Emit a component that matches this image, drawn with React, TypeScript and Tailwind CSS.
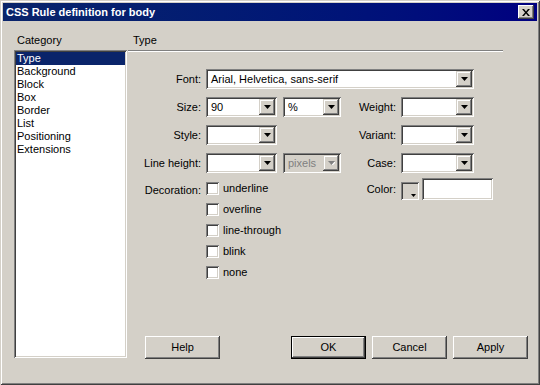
import type { ReactNode } from "react";

const sunken =
  "shadow-[inset_1px_1px_0_#808080,inset_-1px_-1px_0_#ffffff,inset_2px_2px_0_#404040,inset_-2px_-2px_0_#d4d0c8]";
const raised =
  "shadow-[inset_-1px_-1px_0_#404040,inset_1px_1px_0_#d4d0c8,inset_-2px_-2px_0_#808080,inset_2px_2px_0_#ffffff]";
const buttonBevel =
  "shadow-[inset_-1px_-1px_0_#404040,inset_1px_1px_0_#ffffff,inset_-2px_-2px_0_#808080]";

const categories = [
  "Type",
  "Background",
  "Block",
  "Box",
  "Border",
  "List",
  "Positioning",
  "Extensions",
];

const decorations = ["underline", "overline", "line-through", "blink", "none"];

const Arrow = ({ disabled }: { disabled?: boolean }) => (
  <svg width="7" height="4" viewBox="0 0 7 4" className="block">
    {disabled && <path d="M1 1h7L4.5 4.5z" fill="#ffffff" />}
    <path d="M0 0h7L3.5 4z" fill={disabled ? "#808080" : "#000000"} />
  </svg>
);

const Combo = ({
  width,
  value,
  disabled,
}: {
  width: string;
  value?: string;
  disabled?: boolean;
}) => (
  <div
    className={`flex h-[20px] p-[2px] ${width} ${sunken} ${
      disabled ? "bg-[#d4d0c8] text-[#808080]" : "bg-white text-black"
    }`}
  >
    <div className="flex-1 truncate pl-[3px] leading-[16px]">{value}</div>
    <div
      className={`flex h-[16px] w-[16px] items-center justify-center bg-[#d4d0c8] ${raised}`}
    >
      <Arrow disabled={disabled} />
    </div>
  </div>
);

const Label = ({ width, children }: { width: string; children: ReactNode }) => (
  <div className={`${width} shrink-0 pr-[5px] text-right`}>{children}</div>
);

const Button = ({ children, isDefault }: { children: ReactNode; isDefault?: boolean }) => (
  <button
    type="button"
    className={`flex h-[23px] w-[75px] items-center justify-center bg-[#d4d0c8] ${buttonBevel} ${
      isDefault ? "border border-black" : ""
    }`}
  >
    {children}
  </button>
);

export default function App() {
  return (
    <div className="flex h-[385px] w-[540px] flex-col bg-[#d4d0c8] p-[3px] font-['Liberation_Sans',Arial,sans-serif] text-[11px] text-black shadow-[inset_1px_1px_0_#d4d0c8,inset_-1px_-1px_0_#404040,inset_2px_2px_0_#ffffff,inset_-2px_-2px_0_#808080]">
      {/* title bar */}
      <div className="flex h-[18px] shrink-0 items-center justify-between bg-linear-to-r from-[#0a246a] to-[#000080] pl-[3px] pr-[3px]">
        <span className="font-bold text-white">CSS Rule definition for body</span>
        <button
          type="button"
          aria-label="Close"
          className={`flex h-[14px] w-[16px] items-center justify-center bg-[#d4d0c8] ${buttonBevel}`}
        >
          <svg width="8" height="7" viewBox="0 0 8 7" className="block">
            <path d="M0 0h2l2 2.5L6 0h2L5 3.5 8 7H6L4 4.5 2 7H0l3-3.5z" fill="#000" />
          </svg>
        </button>
      </div>

      <div className="flex flex-1 pl-[11px]">
        {/* category list */}
        <div className="w-[113px] shrink-0 pt-[12px]">
          <div className="h-[14px] pl-[3px] leading-[14px]">Category</div>
          <div className={`mt-[3px] h-[308px] bg-white p-[2px] ${sunken}`}>
            {categories.map((c, i) => (
              <div
                key={c}
                className={`h-[13px] pl-[1px] leading-[13px] ${
                  i === 0 ? "bg-[#0a246a] text-white" : ""
                }`}
              >
                {c}
              </div>
            ))}
          </div>
        </div>

        {/* type panel */}
        <div className="ml-[1px] flex flex-1 flex-col pt-[12px]">
          <div className="h-[14px] pl-[5px] leading-[14px]">Type</div>
          <div className="mt-[3px] h-[2px] w-[375px] border-t border-b border-t-[#808080] border-b-white" />

          <div className="mt-[17px] flex h-[20px] items-center">
            <Label width="w-[78px]">Font:</Label>
            <Combo width="w-[268px]" value="Arial, Helvetica, sans-serif" />
          </div>

          <div className="mt-[8px] flex h-[20px] items-center">
            <Label width="w-[78px]">Size:</Label>
            <Combo width="w-[71px]" value="90" />
            <div className="ml-[6px]">
              <Combo width="w-[58px]" value="%" />
            </div>
            <Label width="w-[60px]">Weight:</Label>
            <Combo width="w-[73px]" />
          </div>

          <div className="mt-[8px] flex h-[20px] items-center">
            <Label width="w-[78px]">Style:</Label>
            <Combo width="w-[71px]" />
            <div className="w-[64px]" />
            <Label width="w-[60px]">Variant:</Label>
            <Combo width="w-[73px]" />
          </div>

          <div className="mt-[8px] flex h-[20px] items-center">
            <Label width="w-[78px]">Line height:</Label>
            <Combo width="w-[71px]" />
            <div className="ml-[6px]">
              <Combo width="w-[58px]" value="pixels" disabled />
            </div>
            <Label width="w-[60px]">Case:</Label>
            <Combo width="w-[73px]" />
          </div>

          <div className="mt-[5px] flex items-start">
            <div className="flex w-[213px] pt-[4px]">
              <Label width="w-[78px]">
                <span className="leading-[13px]">Decoration:</span>
              </Label>
              <div className="flex flex-col gap-[8px]">
                {decorations.map((d) => (
                  <div key={d} className="flex h-[13px] items-center">
                    <div className={`h-[13px] w-[13px] bg-white ${sunken}`} />
                    <span className="ml-[4px] leading-[13px]">{d}</span>
                  </div>
                ))}
              </div>
            </div>
            <div className="flex h-[22px] items-center">
              <Label width="w-[60px]">Color:</Label>
              <div className={`relative h-[18px] w-[18px] self-end bg-[#d4d0c8] ${sunken}`}>
                <svg
                  width="5"
                  height="3"
                  viewBox="0 0 5 3"
                  className="absolute bottom-[3px] right-[3px] block"
                >
                  <path d="M0 0h5L2.5 3z" fill="#000" />
                </svg>
              </div>
              <div className={`ml-[3px] h-[22px] w-[71px] bg-white ${sunken}`} />
            </div>
          </div>

          <div className="mb-[23px] mt-auto flex pl-[17px]">
            <Button>Help</Button>
            <div className="ml-[71px] flex gap-[6px]">
              <Button isDefault>OK</Button>
              <Button>Cancel</Button>
              <Button>Apply</Button>
            </div>
          </div>
        </div>
      </div>
    </div>
  );
}
